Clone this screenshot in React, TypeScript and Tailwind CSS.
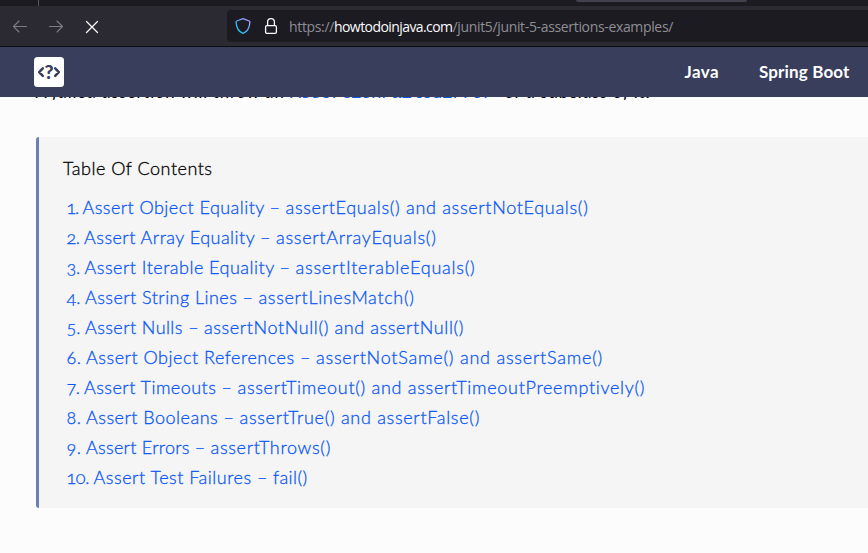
import { useLayoutEffect, useRef, useState } from "react";

type FitProps = { text: string; width: number; className?: string };

// One line of text, tracked so that it spans the given width.
function FitText({ text, width, className = "" }: FitProps) {
  const ref = useRef<HTMLSpanElement>(null);
  const [spacing, setSpacing] = useState(0);
  useLayoutEffect(() => {
    if (!ref.current) return;
    const natural = ref.current.getBoundingClientRect().width - spacing * text.length;
    setSpacing((width - natural) / text.length);
  }, [text, width]);
  return (
    <span className="block shrink-0 whitespace-nowrap" style={{ width }}>
      <span ref={ref} className={`inline-block ${className}`} style={{ letterSpacing: `${spacing}px` }}>
        {text}
      </span>
    </span>
  );
}

const entries = [
  { name: "Assert Object Equality –", call: "assertEquals() and assertNotEquals()", x: 82.5, mid: 285.5, end: 588.5 },
  { name: "Assert Array Equality –", call: "assertArrayEquals()", x: 84, mid: 276, end: 436.5 },
  { name: "Assert Iterable Equality –", call: "assertIterableEquals()", x: 84.5, mid: 295.5, end: 475.5 },
  { name: "Assert String Lines –", call: "assertLinesMatch()", x: 85, mid: 258.5, end: 414.5 },
  { name: "Assert Nulls –", call: "assertNotNull() and assertNull()", x: 85, mid: 204, end: 464 },
  { name: "Assert Object References –", call: "assertNotSame() and assertSame()", x: 86, mid: 316, end: 603 },
  { name: "Assert Timeouts –", call: "assertTimeout() and assertTimeoutPreemptively()", x: 84, mid: 237.5, end: 645.5 },
  { name: "Assert Booleans –", call: "assertTrue() and assertFalse()", x: 86, mid: 239.5, end: 480 },
  { name: "Assert Errors –", call: "assertThrows()", x: 86, mid: 210.5, end: 331 },
  { name: "Assert Test Failures –", call: "fail()", x: 93.5, mid: 273, end: 307.5 },
];

function BrowserChrome() {
  return (
    <div className="shrink-0 bg-[#2b2a33]">
      <div className="flex h-1.5 bg-[#1c1b22]">
        <div className="ml-[38px] w-px bg-[#5b5a63]" />
        <div className="ml-[537px] h-0.5 w-[171px] rounded-b-sm bg-[#42414d]" />
      </div>
      <div className="flex h-[41px] items-center border-b border-[#0c0c0d]">
        <svg className="ml-3 h-4 w-4 text-[#7d7c83]" viewBox="0 0 16 16" fill="none" stroke="currentColor" strokeWidth="1.1" strokeLinecap="round" strokeLinejoin="round">
          <path d="M14.500 8.500H1.500M7 3 1.500 8.500 7 14" />
        </svg>
        <svg className="ml-5 h-4 w-4 text-[#7d7c83]" viewBox="0 0 16 16" fill="none" stroke="currentColor" strokeWidth="1.1" strokeLinecap="round" strokeLinejoin="round">
          <path d="M1.500 8.500h13M9 3l5.500 5.500L9 14" />
        </svg>
        <svg className="ml-5 h-4 w-4 text-[#fbfbfe]" viewBox="0 0 16 16" fill="none" stroke="currentColor" strokeWidth="1.3" strokeLinecap="round">
          <path d="m2.500 3.500 11 11M13.500 3.500l-11 11" />
        </svg>
        <div className="ml-[127px] flex h-8 flex-1 items-center rounded-l bg-[#1c1b22] pl-2">
          <svg className="h-4 w-4" viewBox="0 0 16 16" fill="none">
            <defs>
              <linearGradient id="shield" x1="2" y1="14" x2="14" y2="2" gradientUnits="userSpaceOnUse">
                <stop stopColor="#00ddff" />
                <stop offset="0.5" stopColor="#5ba6f5" />
                <stop offset="1" stopColor="#b59bff" />
              </linearGradient>
            </defs>
            <path d="M8 .7 14.200 3c.5.200.8.600.7 1.100C14.600 9.600 12.800 13.500 8 15.400 3.200 13.500 1.400 9.600 1.100 4.100 1.100 3.600 1.300 3.200 1.800 3Z" stroke="url(#shield)" strokeWidth="1.300" strokeLinejoin="round" />
          </svg>
          <svg className="ml-3 h-4 w-4" viewBox="0 0 16 16" fill="none" stroke="#fbfbfe" strokeWidth="1.300">
            <rect x="2.600" y="7.600" width="10.800" height="7.700" rx="1.300" />
            <path d="M4.600 7.600V4.100a3.400 3.400 0 0 1 6.800 0v3.500" />
          </svg>
          <div className="mt-0.5 ml-2.5 flex font-['Open_Sans',sans-serif] text-[14px] leading-5 text-[#8f8e95]">
            <FitText text="https://" width={45} />
            <FitText text="howtodoinjava.com" width={118.5} className="text-[#fbfbfe]" />
            <FitText text="/junit5/junit-5-assertions-examples/" width={220.5} />
          </div>
        </div>
      </div>
    </div>
  );
}

function SiteHeader() {
  return (
    <header className="flex h-[50px] shrink-0 items-center bg-[#383e5b] pl-[34px] text-[17px] font-bold text-white">
      <svg className="h-[30px] w-[30px]" viewBox="0 0 30 30">
        <rect width="30" height="30" rx="3.500" fill="#fff" />
        <path d="m8.800 11.300-3.600 3.800 3.600 3.800M21.200 11.300l3.600 3.800-3.600 3.800" fill="none" stroke="#383e5b" strokeWidth="2.500" strokeLinecap="round" strokeLinejoin="round" />
        <text x="15" y="22.3" textAnchor="middle" fontFamily="Lato, sans-serif" fontWeight="900" fontSize="19.5" fill="#383e5b">?</text>
      </svg>
      <nav className="ml-[620.500px] flex gap-10">
        <FitText text="Java" width={34.5} />
        <FitText text="Spring Boot" width={90.5} />
      </nav>
    </header>
  );
}

export default function App() {
  return (
    <div className="flex h-[553px] w-[868px] flex-col overflow-hidden bg-[#fcfcfc] font-['Lato',sans-serif]">
      <BrowserChrome />
      <SiteHeader />
      <main className="flex-1 overflow-hidden pl-9">
        <p className="-mt-[21px] flex h-[30px] items-baseline text-[18px] leading-[30px] text-black italic">
          <FitText text="A failed assertion will throw an" width={249} />
          <span className="ml-1.5 mr-3 font-['Liberation_Mono',monospace] text-[#0b57f0]">
            <FitText text="AssertionFailedError" width={202} />
          </span>
          <FitText text="or a subclass of it." width={146} />
        </p>
        <section className="mt-[31px] h-[371px] rounded-l-[3px] border-l-[3px] border-[#6b80b3] bg-[#f5f5f5] pt-4 pl-6 text-[18px] font-light [-webkit-text-stroke:0.3px]">
          <h2 className="leading-[30px] text-black">
            <FitText text="Table Of Contents" width={149.5} />
          </h2>
          <ul className="mt-[9px] pl-[3.500px] text-[#0b57f5]">
            {entries.map((e, i) => (
              <li key={e.name} className="flex h-[30px] leading-[30px]">
                <FitText text={`${i + 1}.`} width={e.x - 71} className="oldstyle-nums" />
                <span className="w-[4.500px] shrink-0" />
                <FitText text={e.name} width={e.mid - e.x - 5} />
                <span className="w-[5px] shrink-0" />
                <FitText text={e.call} width={e.end - e.mid} />
              </li>
            ))}
          </ul>
        </section>
      </main>
    </div>
  );
}
